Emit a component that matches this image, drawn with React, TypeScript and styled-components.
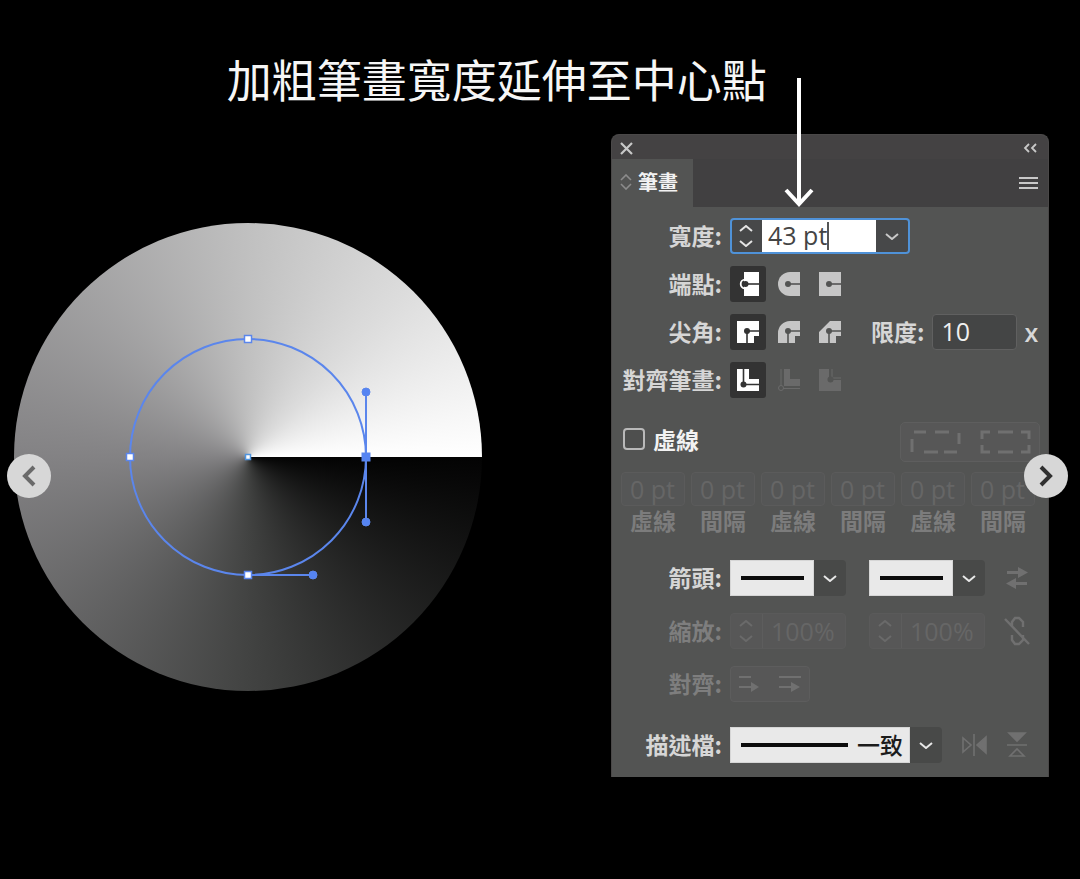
import React from "react";
import styled, { createGlobalStyle } from "styled-components";

const cjk = `"Noto Sans CJK TC", sans-serif`;

const GlobalStyle = createGlobalStyle`
  *, *::before, *::after { box-sizing: border-box; }
  body { margin: 0; background: #000; font-family: ${cjk}; }
  button { border: 0; margin: 0; padding: 0; background: none; cursor: pointer; font: inherit; }
  input, select { margin: 0; border-radius: 0; font: inherit; }
  svg { display: block; flex: none; }
`;

const Slide = styled.main`
  position: relative;
  min-height: 100vh;
  background: #000;
`;

const Headline = styled.h1`
  margin: 0;
  padding: 52px 0 28px 21%;
  font-size: 45px;
  line-height: 54px;
  font-weight: 400;
  color: #f6f6f6;
  white-space: nowrap;
`;

const Columns = styled.div`
  display: grid;
  grid-template-columns: minmax(0, 468fr) minmax(438px, 438fr);
  gap: 129px;
  align-items: start;
  padding: 0 31px 40px 14px;
`;

const Artwork = styled.figure`
  margin: 89px 0 0;
  aspect-ratio: 1;
  border-radius: 50%;
  background: conic-gradient(from 90deg, #030303, #424342 25%, #838284 50%, #c0c0c0 75%, #dcdcdc 87%, #ffffff);
`;

const PanelColumn = styled.div`
  position: relative;
`;

const Pointer = styled.svg`
  position: absolute;
  left: 172px;
  top: -56px;
  z-index: 1;
`;

const Panel = styled.section`
  border-radius: 8px 8px 0 0;
  overflow: hidden;
  background: #535453;
  border: solid #4a4848;
  border-width: 1px 1px 0;
`;

const TitleBar = styled.header`
  display: flex;
  align-items: center;
  justify-content: space-between;
  height: 24px;
  padding: 2px 11px 0 8px;
  background: #444243;
`;

const TabBar = styled.div`
  display: flex;
  align-items: center;
  justify-content: space-between;
  height: 48px;
  padding-right: 10px;
  background: #414041;
`;

const Tab = styled.h2`
  display: flex;
  align-items: center;
  gap: 6px;
  width: 81px;
  height: 48px;
  margin: 0;
  padding: 0 0 2px 8px;
  background: #535453;
  font-size: 20px;
  line-height: 28px;
  font-weight: 700;
  color: #f2f2f2;
`;

const IconButton = styled.button`
  display: flex;
  align-items: center;
  justify-content: center;
  flex: none;
  color: #c8c8c8;
  &:disabled { color: #707070; }
`;

const Body = styled.form`
  padding: 11px 8px 14px 9px;
`;

const Group = styled.div<{ $gap: number; $top?: number }>`
  display: flex;
  flex-direction: column;
  gap: ${(p) => p.$gap}px;
  margin-top: ${(p) => p.$top ?? 0}px;
`;

const Row = styled.div`
  display: flex;
  align-items: center;
  height: 36px;
`;

const RowLabel = styled.label<{ $off?: boolean }>`
  flex: none;
  width: 101px;
  margin-right: 8px;
  padding-bottom: 2px;
  text-align: right;
  font-size: 23px;
  line-height: 32px;
  font-weight: 700;
  white-space: nowrap;
  color: ${(p) => (p.$off ? "#7e7e7e" : "#d6d6d6")};
`;

const InlineLabel = styled(RowLabel)`
  width: auto;
  margin-left: 23px;
`;

const FocusedField = styled.div`
  display: grid;
  grid-template-columns: 30px 1fr 32px;
  width: 180px;
  height: 36px;
  border: 2px solid #4f92d8;
  border-radius: 4px;
  background: #474849;
  overflow: hidden;
`;

const Stepper = styled.span<{ $off?: boolean }>`
  display: flex;
  flex-direction: column;
  align-items: center;
  justify-content: center;
  gap: 8px;
  padding-right: 2px;
  color: ${(p) => (p.$off ? "#6a6a6a" : "#e4e4e4")};
`;

const ValueArea = styled.span`
  display: flex;
  align-items: center;
  padding-left: 6px;
  background: #fff;
`;

const ValueInput = styled.input`
  field-sizing: content;
  padding: 0 0 2px;
  border: 0;
  outline: 0;
  background: transparent;
  font-family: "Open Sans", sans-serif;
  font-size: 25px;
  line-height: 30px;
  font-weight: 500;
  color: #444;
`;

const Caret = styled.span`
  width: 2px;
  height: 28px;
  background: #555;
`;

const LimitInput = styled.input`
  width: 85px;
  height: 36px;
  padding: 0 8px 2px;
  border: 1px solid #606060;
  border-radius: 4px;
  background: #444545;
  font-family: "Open Sans", sans-serif;
  font-size: 25px;
  line-height: 30px;
  font-weight: 500;
  color: #f0f0f0;
`;

const Unit = styled.span`
  margin-left: 7px;
  font-family: "Open Sans", sans-serif;
  font-size: 25px;
  line-height: 30px;
  font-weight: 600;
  color: #d8d8d8;
`;

const Toggles = styled.div`
  display: flex;
  gap: 5px;
`;

const Toggle = styled.button<{ $on?: boolean }>`
  display: flex;
  align-items: center;
  justify-content: center;
  width: 36px;
  height: 36px;
  border-radius: 3px;
  --cut: ${(p) => (p.$on ? "#333" : "#535453")};
  background: ${(p) => (p.$on ? "#333" : "transparent")};
  color: ${(p) => (p.$on ? "#fff" : "#c6c6c6")};
  &:disabled { color: #6a6a6a; }
`;

const DashHeader = styled.div`
  display: flex;
  align-items: center;
  justify-content: space-between;
  margin-top: 24px;
`;

const CheckLabel = styled.label`
  display: flex;
  align-items: center;
  gap: 8px;
  padding: 0 0 6px 2px;
  font-size: 23px;
  line-height: 32px;
  font-weight: 700;
  color: #f2f2f2;
`;

const Checkbox = styled.input`
  appearance: none;
  width: 22px;
  height: 22px;
  border: 2px solid #b9b9b9;
  border-radius: 4px;
  background: #4e4f4e;
`;

const DashPresets = styled.div`
  display: flex;
  align-items: center;
  justify-content: center;
  gap: 19px;
  width: 140px;
  height: 40px;
  border: 1px solid #5e5e5e;
  border-radius: 5px;
  background: #575757;
`;

const DashGrid = styled.div`
  display: grid;
  grid-template-columns: repeat(6, minmax(0, 64px));
  gap: 6px;
  margin-top: 10px;
`;

const DashCell = styled.label`
  display: flex;
  flex-direction: column;
  align-items: center;
  padding-bottom: 4px;
  font-size: 23px;
  line-height: 28px;
  font-weight: 700;
  color: #7c7c7c;
`;

const QuietInput = styled.input`
  width: 100%;
  min-width: 0;
  height: 34px;
  padding: 0 0 0 8px;
  border: 1px solid #5b5b5b;
  border-radius: 4px;
  background: #555656;
  font-family: "Open Sans", sans-serif;
  font-size: 25px;
  line-height: 30px;
  font-weight: 500;
  color: #666666;
`;

const Pair = styled.div`
  display: flex;
  gap: 23px;
  margin-right: 19px;
`;

const Combo = styled.div<{ $wide?: boolean }>`
  display: flex;
  flex: none;
  width: ${(p) => (p.$wide ? 212 : 116)}px;
  height: 36px;
`;

const LineSelect = styled.select<{ $line: number }>`
  appearance: none;
  flex: 1;
  min-width: 0;
  padding: 0 0 3px ${(p) => p.$line + 19}px;
  border: 1px solid #d6d6d6;
  background: #e9e9e9 linear-gradient(#0c0c0c, #0c0c0c) no-repeat 10px 50% / ${(p) => p.$line}px 4px;
  font-size: 23px;
  line-height: 32px;
  font-weight: 500;
  color: #1c1c1c;
`;

const DropButton = styled(IconButton)`
  width: 32px;
  border-radius: 0 4px 4px 0;
  background: #484948;
  color: #e8e8e8;
`;

const ScaleField = styled.div`
  display: grid;
  grid-template-columns: 31px 1fr;
  width: 116px;
  height: 36px;
  border: 1px solid #5a5a5a;
  border-radius: 4px;
  background: #575757;
`;

const ScaleInput = styled(QuietInput)`
  border: 0;
  border-left: 1px solid #5d5d5d;
  border-radius: 0;
  background: transparent;
`;

const AlignBox = styled.div`
  display: flex;
  align-items: center;
  justify-content: center;
  gap: 18px;
  width: 80px;
  height: 36px;
  border: 1px solid #5d5d5d;
  border-radius: 4px;
  background: #575757;
`;

const FlipButtons = styled.div`
  display: flex;
  gap: 4px;
  margin-left: 18px;
`;

const NavButton = styled.button<{ $side: "left" | "right" }>`
  position: absolute;
  top: 454px;
  ${(p) => (p.$side === "left" ? "left: 7px" : "right: 12px")};
  z-index: 2;
  display: flex;
  align-items: center;
  justify-content: center;
  width: 44px;
  height: 44px;
  border-radius: 50%;
  background: #d7d7d7;
  color: ${(p) => (p.$side === "left" ? "#6a6a6a" : "#303030")};
`;

const line = { fill: "none", stroke: "currentColor" } as const;

const Chevron = ({ up }: { up?: boolean }) => (
  <svg width="14" height="7" viewBox="0 0 14 7" {...line} strokeWidth="2">
    <path d={up ? "M1 6l6-5 6 5" : "M1 1l6 5 6-5"} />
  </svg>
);

const Dot = ({ x, y }: { x: number; y: number }) => <circle cx={x} cy={y} r="3" fill="var(--cut)" />;

const Glyph = ({ children }: { children: React.ReactNode }) => (
  <svg width="24" height="24" viewBox="0 0 24 24">{children}</svg>
);

const Cut = ({ d }: { d: string }) => <path d={d} fill="none" stroke="var(--cut)" strokeWidth="1.6" />;

const capIcons = [
  <Glyph>
    <circle cx="9" cy="12" r="4.3" {...line} strokeWidth="1.8" />
    <path d="M8 0h15v24H8z" fill="currentColor" />
    <Cut d="M9 12h14" /><Dot x={9.5} y={12} />
  </Glyph>,
  <Glyph>
    <path d="M23 0v24H13A12 12 0 0 1 13 0z" fill="currentColor" />
    <Cut d="M11 12h12" /><Dot x={11} y={12} />
  </Glyph>,
  <Glyph>
    <path d="M1 0h22v24H1z" fill="currentColor" />
    <Cut d="M11 12h12" /><Dot x={11} y={12} />
  </Glyph>,
];

const joinIcons = ["M1 1h22v15h-5v7H1z", "M13 1h10v15h-5v7H1V13A12 12 0 0 1 13 1z", "M12 1h11v15h-5v7H1V12z"].map((d) => (
  <Glyph key={d}>
    <path d={d} fill="currentColor" />
    <Cut d="M23 11H11v12" /><Dot x={11} y={11} />
  </Glyph>
));

const alignIcons = [
  <Glyph>
    <path d="M1 1h12v10h10v12H1z" fill="currentColor" />
    <Cut d="M7.500 1v15.500H23" /><Dot x={7.5} y={16.5} />
  </Glyph>,
  <Glyph>
    <path d="M7 1h6v10h10v7H7z" fill="currentColor" />
    <path d="M4 1v17M6 20.500h17" {...line} strokeWidth="1" />
    <circle cx="4" cy="20" r="2.500" {...line} strokeWidth="1" />
  </Glyph>,
  <Glyph>
    <path d="M1 1h10v11h12v11H1z" fill="currentColor" />
    <path d="M14 1v9h9" {...line} strokeWidth="1" />
    <Dot x={12.5} y={11.5} />
  </Glyph>,
];

type ToggleRowProps = { label: string; icons: React.ReactNode[]; lockRest?: boolean; children?: React.ReactNode };

const ToggleRow = ({ label, icons, lockRest, children }: ToggleRowProps) => (
  <Row>
    <RowLabel as="span">{label}</RowLabel>
    <Toggles role="group" aria-label={label}>
      {icons.map((icon, i) => (
        <Toggle key={i} type="button" $on={i === 0} aria-pressed={i === 0} aria-label={`${label} ${i + 1}`} disabled={lockRest && i > 0}>
          {icon}
        </Toggle>
      ))}
    </Toggles>
    {children}
  </Row>
);

const ArrowCombo = ({ id, label }: { id: string; label: string }) => (
  <Combo>
    <LineSelect id={id} aria-label={label} $line={63}>
      <option value="none" />
    </LineSelect>
    <DropButton type="button" aria-label={label}><Chevron /></DropButton>
  </Combo>
);

const Scale = ({ id, label }: { id: string; label: string }) => (
  <ScaleField>
    <Stepper $off><Chevron up /><Chevron /></Stepper>
    <ScaleInput id={id} aria-label={label} disabled defaultValue="100%" />
  </ScaleField>
);

const PathOverlay = () => (
  <svg width="100%" viewBox="0 0 468 468" fill="#5584f2" stroke="#5b86ec">
    <circle cx="234" cy="234" r="118" fill="none" strokeWidth="2" />
    <path d="M352 169v130M234 352h65" strokeWidth="2" />
    <circle cx="352" cy="169" r="4" />
    <circle cx="352" cy="299" r="4" />
    <circle cx="299" cy="352" r="4" />
    <rect x="348" y="230" width="8" height="8" />
    <g fill="#fff" strokeWidth="1.500">
      <rect x="230.500" y="112.500" width="7" height="7" />
      <rect x="112.500" y="230.500" width="7" height="7" />
      <rect x="230.500" y="348.500" width="7" height="7" />
      <rect x="231.500" y="231.500" width="5" height="5" stroke="#4f95e0" />
    </g>
  </svg>
);

export default function App() {
  return (
    <Slide>
      <GlobalStyle />
      <Headline>加粗筆畫寬度延伸至中心點</Headline>
      <Columns>
        <Artwork><PathOverlay /></Artwork>
        <PanelColumn>
          <Pointer width="32" height="130" viewBox="0 0 32 130" fill="none" stroke="#fff" strokeWidth="4">
            <path d="M16 0v126M3 112l13 14 13-14" />
          </Pointer>
          <Panel>
            <TitleBar>
              <IconButton type="button" aria-label="關閉">
                <svg width="13" height="13" viewBox="0 0 13 13" {...line} strokeWidth="2.200"><path d="M1 1l11 11M12 1L1 12" /></svg>
              </IconButton>
              <IconButton type="button" aria-label="收合">
                <svg width="14" height="10" viewBox="0 0 14 10" {...line} strokeWidth="1.800"><path d="M6 1L2 5l4 4M13 1L9 5l4 4" /></svg>
              </IconButton>
            </TitleBar>
            <TabBar>
              <Tab>
                <svg width="12" height="16" viewBox="0 0 12 16" fill="none" stroke="#8c8c8c" strokeWidth="1.600"><path d="M1 6l5-5 5 5M1 10l5 5 5-5" /></svg>
                筆畫
              </Tab>
              <IconButton type="button" aria-label="選單">
                <svg width="19" height="14" viewBox="0 0 19 14" {...line} strokeWidth="2"><path d="M0 2h19M0 7h19M0 12h19" /></svg>
              </IconButton>
            </TabBar>
            <Body onSubmit={(e) => e.preventDefault()}>
              <Group $gap={12}>
                <Row>
                  <RowLabel htmlFor="weight">寬度:</RowLabel>
                  <FocusedField>
                    <Stepper><Chevron up /><Chevron /></Stepper>
                    <ValueArea><ValueInput id="weight" defaultValue="43 pt" /><Caret /></ValueArea>
                    <IconButton type="button" aria-label="寬度選項"><Chevron /></IconButton>
                  </FocusedField>
                </Row>
                <ToggleRow label="端點:" icons={capIcons} />
                <ToggleRow label="尖角:" icons={joinIcons}>
                  <InlineLabel htmlFor="limit">限度:</InlineLabel>
                  <LimitInput id="limit" defaultValue="10" />
                  <Unit>x</Unit>
                </ToggleRow>
                <ToggleRow label="對齊筆畫:" icons={alignIcons} lockRest />
              </Group>

              <DashHeader>
                <CheckLabel><Checkbox type="checkbox" />虛線</CheckLabel>
                <DashPresets>
                  <IconButton type="button" aria-label="保留精確長度" disabled>
                    <svg width="51" height="24" viewBox="0 0 51 24" {...line} strokeWidth="3"><path d="M2 22V9M4 2h12M25 2h14M49 3v11M14 22h14M34 22h13" /></svg>
                  </IconButton>
                  <IconButton type="button" aria-label="對齊轉角" disabled>
                    <svg width="51" height="24" viewBox="0 0 51 24" {...line} strokeWidth="3"><path d="M2 9V2h8M18 2h15M41 2h8v7M49 15v7h-8M33 22H18M10 22H2v-7" /></svg>
                  </IconButton>
                </DashPresets>
              </DashHeader>
              <DashGrid>
                {["虛線", "間隔", "虛線", "間隔", "虛線", "間隔"].map((name, i) => (
                  <DashCell key={i}>
                    <QuietInput disabled defaultValue="0 pt" />
                    {name}
                  </DashCell>
                ))}
              </DashGrid>

              <Group $gap={17} $top={22}>
                <Row>
                  <RowLabel htmlFor="arrow-start">箭頭:</RowLabel>
                  <Pair>
                    <ArrowCombo id="arrow-start" label="起點箭頭" />
                    <ArrowCombo id="arrow-end" label="終點箭頭" />
                  </Pair>
                  <IconButton type="button" aria-label="交換箭頭" disabled>
                    <svg width="26" height="22" viewBox="0 0 26 22" fill="currentColor"><path d="M3 4h11V0l10 5.500-10 5.500V7H3zM23 15H12v-4L2 16.500 12 22v-4h11z" /></svg>
                  </IconButton>
                </Row>
                <Row>
                  <RowLabel $off htmlFor="scale-start">縮放:</RowLabel>
                  <Pair>
                    <Scale id="scale-start" label="起點縮放" />
                    <Scale id="scale-end" label="終點縮放" />
                  </Pair>
                  <IconButton type="button" aria-label="連結縮放" disabled>
                    <svg width="26" height="32" viewBox="0 0 26 32" {...line} strokeWidth="2.400"><path d="M8 12V7l3-4h4l4 4v5M8 20v5l3 4h4l4-4v-5M1 4l24 25" /></svg>
                  </IconButton>
                </Row>
                <Row>
                  <RowLabel as="span" $off>對齊:</RowLabel>
                  <AlignBox>
                    <IconButton type="button" aria-label="延伸至路徑末端外" disabled>
                      <svg width="22" height="18" viewBox="0 0 22 18" fill="currentColor"><path d="M0 1h12v2H0zM0 11h12V7l8 5-8 5v-4H0z" /></svg>
                    </IconButton>
                    <IconButton type="button" aria-label="置於路徑末端" disabled>
                      <svg width="22" height="18" viewBox="0 0 22 18" fill="currentColor"><path d="M0 1h22v2H0zM0 11h12V7l9 5-9 5v-4H0z" /></svg>
                    </IconButton>
                  </AlignBox>
                </Row>
              </Group>

              <Group $gap={0} $top={25}>
                <Row>
                  <RowLabel htmlFor="profile">描述檔:</RowLabel>
                  <Combo $wide>
                    <LineSelect id="profile" $line={107}>
                      <option>一致</option>
                    </LineSelect>
                    <DropButton type="button" aria-label="描述檔選項"><Chevron /></DropButton>
                  </Combo>
                  <FlipButtons>
                    <IconButton type="button" aria-label="水平翻轉" disabled>
                      <svg width="40" height="28" viewBox="0 0 40 28" {...line} strokeWidth="1.600"><path d="M3 7v14l8-7zM14 3v22" /><path d="M26 6v16l-9-8z" fill="currentColor" /></svg>
                    </IconButton>
                    <IconButton type="button" aria-label="垂直翻轉" disabled>
                      <svg width="26" height="28" viewBox="0 0 26 28" {...line} strokeWidth="1.600"><path d="M5 2h16l-8 8z" fill="currentColor" /><path d="M3 14h20M6 25h14l-7-7z" /></svg>
                    </IconButton>
                  </FlipButtons>
                </Row>
              </Group>
            </Body>
          </Panel>
        </PanelColumn>
      </Columns>
      <NavButton $side="left" aria-label="上一張">
        <svg width="16" height="22" viewBox="0 0 16 22" {...line} strokeWidth="4"><path d="M13 2L4 11l9 9" /></svg>
      </NavButton>
      <NavButton $side="right" aria-label="下一張">
        <svg width="16" height="22" viewBox="0 0 16 22" {...line} strokeWidth="4"><path d="M3 2l9 9-9 9" /></svg>
      </NavButton>
    </Slide>
  );
}
